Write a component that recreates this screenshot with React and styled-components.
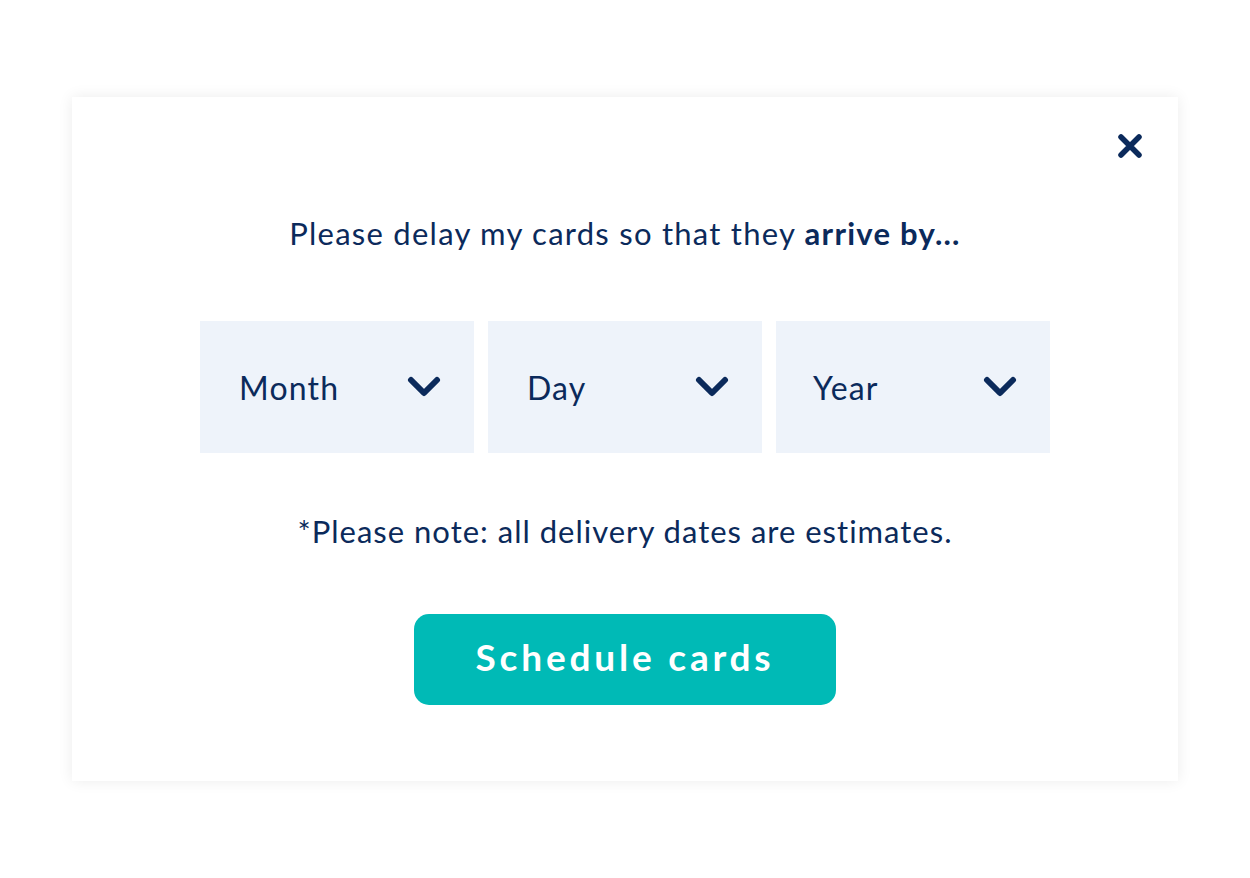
import React, { useState } from "react";
import styled, { createGlobalStyle } from "styled-components";

const GlobalStyle = createGlobalStyle`
  body {
    margin: 0;
    background: #ffffff;
    font-family: "Lato", "Open Sans", sans-serif;
    color: #0b2a5b;
  }
`;

const Page = styled.div`
  padding: 97px 72px 97px;
`;

const Card = styled.div`
  position: relative;
  background: #ffffff;
  box-shadow: 0 0 14px rgba(0, 0, 0, 0.08);
  height: 684px;
  box-sizing: border-box;
  padding-top: 114px;
  display: flex;
  flex-direction: column;
  align-items: center;
`;

const CloseButton = styled.button`
  position: absolute;
  top: 34px;
  right: 33px;
  width: 30px;
  height: 30px;
  padding: 0;
  border: none;
  background: none;
  cursor: pointer;
  display: flex;
  align-items: center;
  justify-content: center;
`;

const Heading = styled.p`
  margin: 0;
  font-size: 31px;
  line-height: 44px;
  font-weight: 400;
  letter-spacing: 1.25px;
  color: #0b2a5b;

  & strong {
    font-weight: 700;
  }
`;

const SelectRow = styled.div`
  display: flex;
  gap: 14px;
  margin-top: 66px;
`;

const SelectBox = styled.div`
  width: 274px;
  height: 132px;
  background: #eef3fa;
  box-sizing: border-box;
  padding: 0 33px 0 ${(p) => p.$pad}px;
  display: flex;
  align-items: center;
  justify-content: space-between;
  cursor: pointer;
`;

const SelectLabel = styled.span`
  font-size: 32px;
  letter-spacing: 1.2px;
  color: #0b2a5b;
`;

const Note = styled.p`
  margin: 56px 0 0;
  font-size: 31px;
  line-height: 44px;
  letter-spacing: 1px;
  color: #0b2a5b;
`;

const PrimaryButton = styled.button`
  margin-top: 61px;
  width: 422px;
  height: 91px;
  padding: 0 0 6px;
  border: none;
  border-radius: 15px;
  background: #00bab6;
  color: #ffffff;
  font-family: "Lato", sans-serif;
  font-size: 37px;
  font-weight: 700;
  letter-spacing: 3.8px;
  cursor: pointer;
`;

const Chevron = () => (
  <svg width="34" height="22" viewBox="0 0 34 22" fill="none">
    <path
      d="M4 4 L17 17 L30 4"
      stroke="#0b2a5b"
      strokeWidth="6"
      strokeLinecap="round"
      strokeLinejoin="round"
    />
  </svg>
);

const CloseIcon = () => (
  <svg width="26" height="26" viewBox="0 0 26 26" fill="none">
    <path
      d="M4 4 L22 22 M22 4 L4 22"
      stroke="#0b2a5b"
      strokeWidth="5.5"
      strokeLinecap="round"
    />
  </svg>
);

const fields = [
  { label: "Month", pad: 39 },
  { label: "Day", pad: 39 },
  { label: "Year", pad: 37 },
];

export default function App() {
  const [open, setOpen] = useState(true);

  return (
    <>
      <GlobalStyle />
      <Page>
        {open && (
          <Card>
            <CloseButton onClick={() => setOpen(false)} aria-label="Close">
              <CloseIcon />
            </CloseButton>
            <Heading>
              Please delay my cards so that they <strong>arrive by...</strong>
            </Heading>
            <SelectRow>
              {fields.map((f) => (
                <SelectBox key={f.label} $pad={f.pad}>
                  <SelectLabel>{f.label}</SelectLabel>
                  <Chevron />
                </SelectBox>
              ))}
            </SelectRow>
            <Note>*Please note: all delivery dates are estimates.</Note>
            <PrimaryButton>Schedule cards</PrimaryButton>
          </Card>
        )}
      </Page>
    </>
  );
}
